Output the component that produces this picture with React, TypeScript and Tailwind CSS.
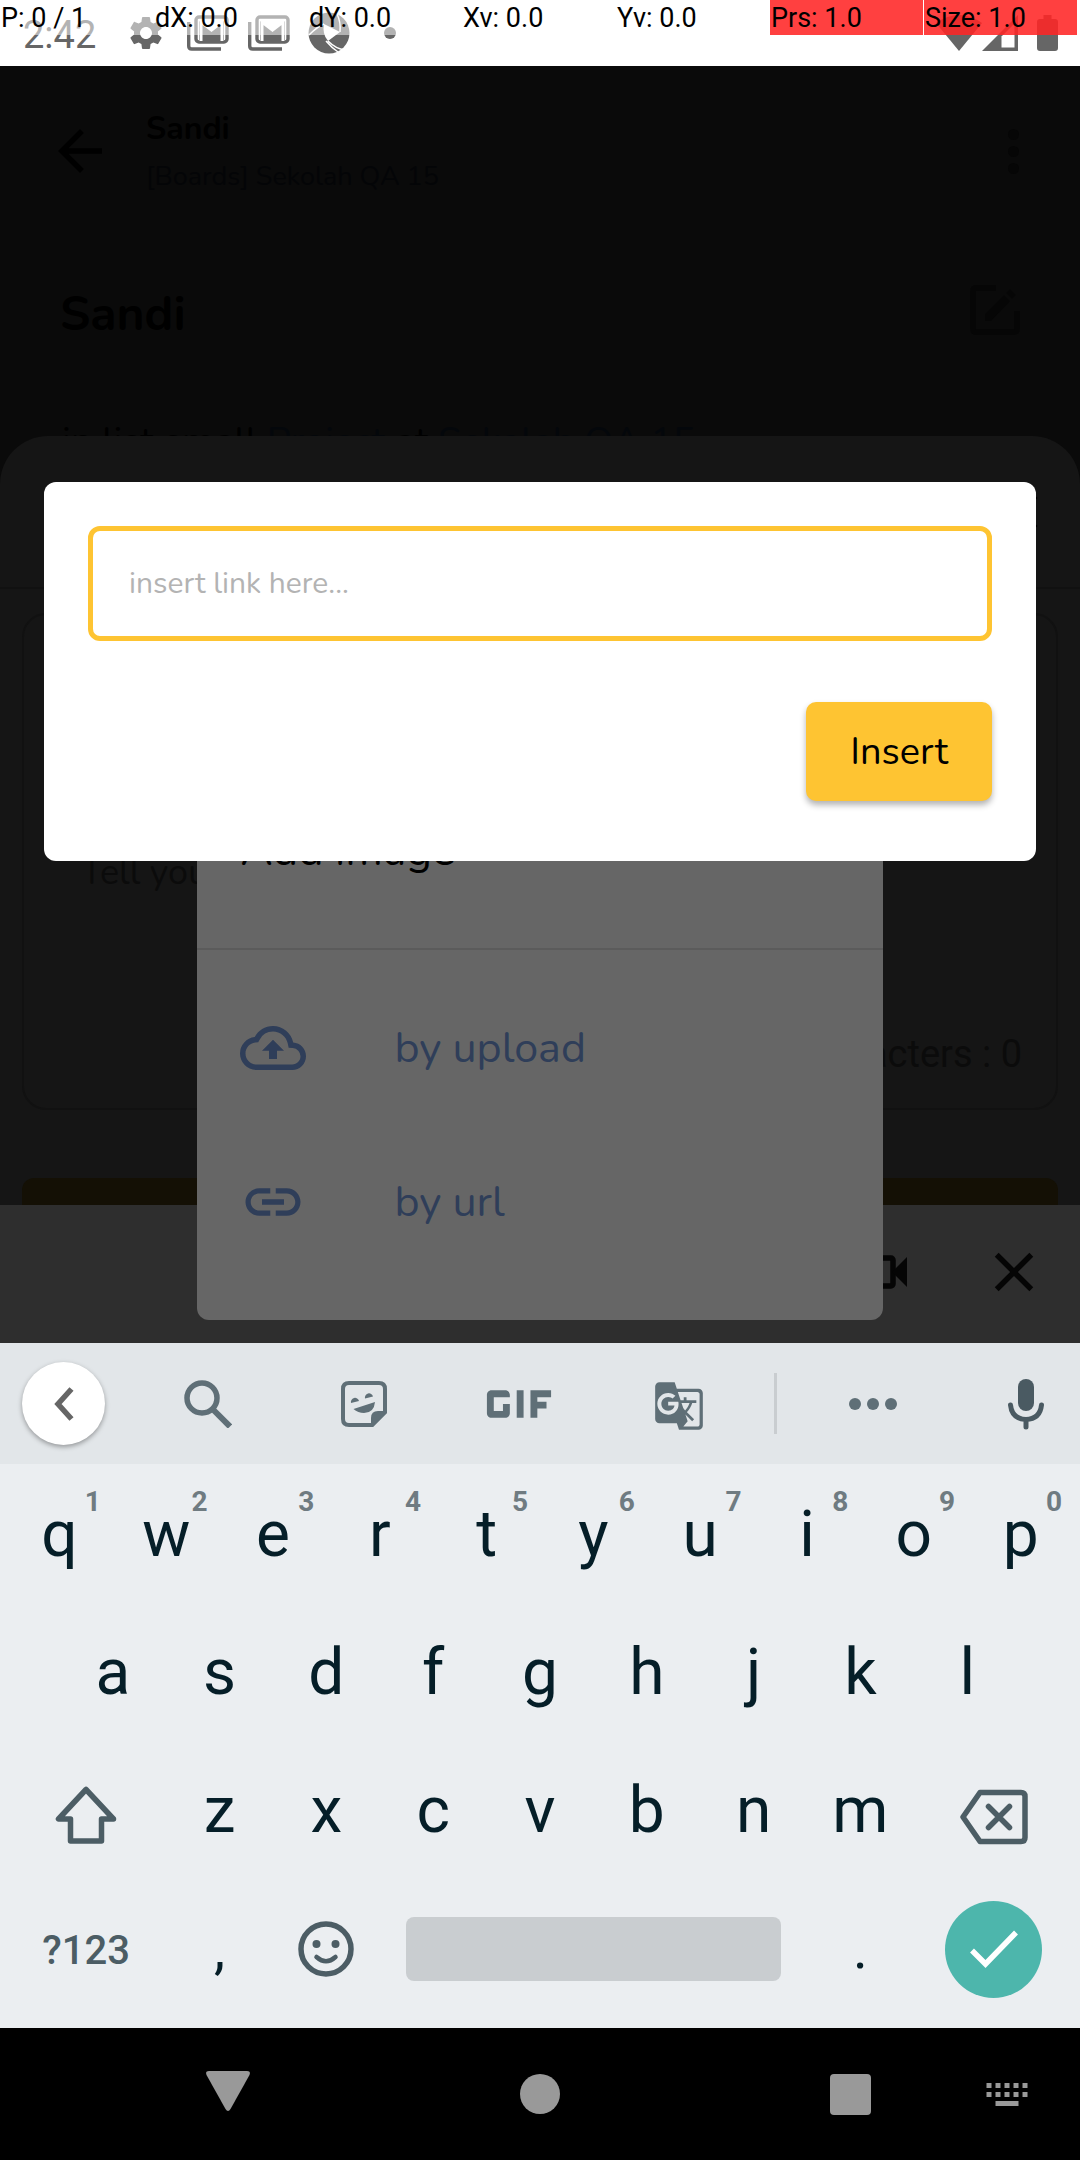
import type { ReactNode } from "react";
import {
  MdArrowBack,
  MdClose,
  MdGTranslate,
  MdGif,
  MdLink,
  MdOutlineCloudUpload,
  MdSettings,
} from "react-icons/md";

const pointerReadings = [
  { label: "P: 0 / 1", alert: false },
  { label: "dX: 0.0", alert: false },
  { label: "dY: 0.0", alert: false },
  { label: "Xv: 0.0", alert: false },
  { label: "Yv: 0.0", alert: false },
  { label: "Prs: 1.0", alert: true },
  { label: "Size: 1.0", alert: true },
];

function PointerOverlay() {
  return (
    <div className="absolute inset-x-0 top-0 grid h-[35px] grid-cols-7 gap-px bg-white/50 pr-[3px] font-['Roboto',sans-serif] text-[27px] leading-[37px] text-black">
      {pointerReadings.map((r) => (
        <span key={r.label} className={r.alert ? "h-[35px] bg-[#ff0000]/75 pl-px" : "h-[35px] pl-px"}>
          {r.label}
        </span>
      ))}
    </div>
  );
}

function MailStackIcon() {
  return (
    <svg viewBox="0 0 42 36" className="h-9 w-[42px]" fill="none" stroke="currentColor">
      <rect x="9" y="2" width="31" height="25" rx="3" strokeWidth="3.4" />
      <path d="M12 26V6l12.500 9L37 6v20z" fill="currentColor" stroke="none" />
      <path d="M14 26V7l10.500 8L35 7v19" stroke="#fff" strokeWidth="3" />
      <path d="M1.700 7v24q0 3 3 3H34" strokeWidth="3.400" />
    </svg>
  );
}

function ShutterIcon() {
  return (
    <svg viewBox="0 0 42 42" className="h-[42px] w-[42px]">
      <circle cx="21" cy="21" r="20.500" fill="currentColor" />
      <path d="M16 12l16 8-12 9q-6-7-4-17z" fill="#fff" />
      <path
        d="M16 12Q10 14 1 23M32 20Q33 10 29 2M20 29q8 8 17 9M18 29q6 7 12 11"
        stroke="#fff"
        strokeWidth="1.500"
        fill="none"
      />
    </svg>
  );
}

function StatusBar() {
  return (
    <header className="relative flex h-[66px] items-start justify-between bg-white pr-[22px] pl-[23px] text-[#666]">
      <div className="flex h-[66px] items-center">
        <span className="w-[103px] pt-1 font-['Roboto',sans-serif] text-[38px] leading-[62px]">2:42</span>
        <MdSettings className="size-10" />
        <div className="w-[21px]" />
        <MailStackIcon />
        <div className="w-[19px]" />
        <MailStackIcon />
        <div className="w-[18px]" />
        <ShutterIcon />
        <div className="ml-[34px] size-3 rounded-full bg-[#666]" />
      </div>
      <div className="flex h-[66px] items-center">
        <svg viewBox="0 0 46 36" className="h-9 w-[46px]" fill="currentColor">
          <path d="M0 8Q23-8 46 8L23 36z" />
        </svg>
        <svg viewBox="0 0 36 36" className="h-9 w-9" fill="currentColor">
          <path d="M0 36L36 0v36z" />
          <path d="M19.500 21.500L32.500 8.500v24h-13z" fill="#fff" />
        </svg>
        <svg viewBox="0 0 21 36" className="ml-[19px] h-9 w-[21px]" fill="currentColor">
          <path d="M6.500 0h8v4H18q3 0 3 3v26q0 3-3 3H3q-3 0-3-3V7q0-3 3-3h3.500z" />
        </svg>
      </div>
      <PointerOverlay />
    </header>
  );
}

function BoardPage() {
  return (
    <div className="col-start-1 row-start-1 min-w-0 bg-[#0a0a0a] text-black">
      <StatusBar />
      <div className="flex items-center pt-[39px] pr-[53px] pl-[47px]">
        <button aria-label="Back" className="w-[99px]">
          <MdArrowBack className="-mt-1 size-[66px]" />
        </button>
        <div className="flex-1">
          <h1 className="text-[32px] leading-[48px] font-bold">Sandi</h1>
          <p className="text-[27px] leading-[48px] text-[#040507]">[Boards] Sekolah QA 15</p>
        </div>
        <button aria-label="More options" className="flex w-7 flex-col items-center gap-1.5 pb-1">
          <span className="size-[11px] rounded-full bg-[#060606]" />
          <span className="size-[11px] rounded-full bg-[#060606]" />
          <span className="size-[11px] rounded-full bg-[#060606]" />
        </button>
      </div>
      <div className="flex items-center justify-between pt-[77px] pr-[60px] pl-[60px]">
        <h2 className="text-[48px] leading-[72px] font-bold">Sandi</h2>
        <button aria-label="Edit list" className="pb-2 text-[#060606]">
          <svg viewBox="0 0 50 50" className="size-[50px]" fill="none" stroke="currentColor">
            <path d="M26 3H6q-3 0-3 3v38q0 3 3 3h38q3 0 3-3V26" strokeWidth="5.500" />
            <path d="M15 36v-7L34 10l6 6-19 20z" fill="currentColor" stroke="none" />
            <path d="M36 8l4-4 6 6-4 4z" fill="currentColor" stroke="none" />
          </svg>
        </button>
      </div>
      <p className="pt-[66px] pl-[62px] text-[38px] leading-[52px]">
        in list small <span className="text-[#04070b]">Project</span> at{" "}
        <span className="text-[#04070b]">Sekolah QA 15</span>
      </p>
    </div>
  );
}

function ComposerSheet() {
  return (
    <div className="z-10 col-start-1 row-start-1 mt-[436px] flex min-w-0 flex-col overflow-hidden rounded-t-[48px] bg-[#151515]">
      <div className="flex h-[153px] items-center justify-end border-b-2 border-[#111] pr-[30px]">
        <button aria-label="Close sheet" className="text-black">
          <MdClose className="size-[60px]" />
        </button>
      </div>
      <div className="flex h-[616px] flex-col overflow-hidden px-[22px] pt-6 text-[38px] leading-[52px] text-[#0b0b0b]">
        <div className="flex h-[497px] shrink-0 flex-col justify-between rounded-3xl border-2 border-[#111] pt-[232px] pr-[34px] pb-7 pl-[57px]">
          <p className="text-[36px]">Tell your story</p>
          <p className="text-right font-['Roboto',sans-serif]">Characters : 0</p>
        </div>
        <button aria-label="Publish" className="mt-[68px] h-28 shrink-0 rounded-xl bg-[#141005]" />
      </div>
      <div className="flex h-[138px] items-center justify-end bg-[#2e2e2e] pr-[33px] pb-1 text-[#050505]">
        <button aria-label="Add video">
          <svg viewBox="0 0 52 34" className="h-[34px] w-[52px]" fill="none" stroke="currentColor">
            <rect x="3" y="3" width="35" height="28" rx="2" strokeWidth="5.500" />
            <path d="M37 17L52 2v30z" fill="currentColor" stroke="none" />
          </svg>
        </button>
        <button aria-label="Close toolbar" className="ml-[74px]">
          <MdClose className="size-[66px]" />
        </button>
      </div>
    </div>
  );
}

function AddImageDialog() {
  return (
    <section
      aria-label="Add image"
      className="z-20 col-start-1 row-start-1 mx-[18.2%] mb-[23px] min-w-0 self-end rounded-b-xl bg-[#666] pb-[41px]"
    >
      <h2 className="border-b-2 border-[#5b5b5b] px-11 pt-[60px] pb-[68px] text-[44px] leading-[58px] text-black">
        Add image
      </h2>
      <div className="pt-[21px] text-[43px] text-[#2f3e59]">
        <button className="flex h-[154px] w-full items-center pl-10">
          <span className="flex w-[158px]">
            <MdOutlineCloudUpload className="ml-[3px] size-[66px]" />
          </span>
          by upload
        </button>
        <button className="flex h-[154px] w-full items-center pl-10">
          <span className="flex w-[158px]">
            <MdLink className="ml-[3px] size-[66px]" />
          </span>
          by url
        </button>
      </div>
    </section>
  );
}

function InsertLinkDialog() {
  return (
    <form
      aria-label="Insert link"
      onSubmit={(e) => e.preventDefault()}
      className="z-30 col-start-1 row-start-1 mx-11 flex min-w-0 flex-col items-end self-center rounded-xl bg-white p-11 pb-[60px]"
    >
      <input
        type="text"
        aria-label="Link"
        placeholder="insert link here..."
        className="h-[115px] w-full rounded-xl border-[5px] border-[#fec432] px-9 text-[30px] text-black outline-none placeholder:text-[#b3b3b3]"
      />
      <button className="mt-[61px] h-[99px] rounded-[10px] bg-[#fec432] px-11 text-[38px] text-black shadow-[0_4px_6px_rgba(0,0,0,0.3)]">
        Insert
      </button>
    </form>
  );
}

function StickerIcon() {
  return (
    <svg viewBox="0 0 46 46" className="size-[46px]" fill="none" stroke="currentColor">
      <path d="M8 2h30q6 0 6 6v23L31 44H8q-6 0-6-6V8q0-6 6-6z" strokeWidth="4" />
      <path d="M30 46V37q0-7 7-7h9v2L32 46z" fill="currentColor" stroke="none" />
      <path
        d="M10 22a4 4 0 0 1 8-2zM24 17.500a4 4 0 0 1 8-2zM12.500 28L34 21q-1 11-11 11-6 0-10.500-4z"
        fill="currentColor"
        stroke="none"
      />
    </svg>
  );
}

function SuggestionStrip() {
  return (
    <div className="grid h-[121px] grid-cols-[128fr_160fr_154fr_156fr_164fr_30fr_166fr_124fr] items-center justify-items-center bg-[#e2e6e9] text-[#5f6f77]">
      <button
        aria-label="Collapse"
        className="flex size-[83px] items-center justify-center rounded-full bg-white text-[#666] shadow-[0_2px_5px_rgba(0,0,0,0.35)]"
      >
        <svg viewBox="0 0 20 34" className="h-[34px] w-5" fill="none" stroke="currentColor" strokeWidth="5.500">
          <path d="M17.500 2L4 17l13.500 15" />
        </svg>
      </button>
      <button aria-label="Search">
        <svg viewBox="0 0 48 48" className="size-12" fill="none" stroke="currentColor">
          <circle cx="18" cy="18" r="15" strokeWidth="5.500" />
          <path d="M29.500 30L46 46.500" strokeWidth="6" />
        </svg>
      </button>
      <button aria-label="Stickers">
        <StickerIcon />
      </button>
      <button aria-label="GIF">
        <MdGif className="size-[110px]" />
      </button>
      <button aria-label="Translate" className="pt-1">
        <MdGTranslate className="size-[52px]" />
      </button>
      <div className="h-[61px] w-[3px] bg-[#c9cdd0]" />
      <button aria-label="More" className="flex gap-1.5">
        <span className="size-3 rounded-full bg-[#5f6f77]" />
        <span className="size-3 rounded-full bg-[#5f6f77]" />
        <span className="size-3 rounded-full bg-[#5f6f77]" />
      </button>
      <button aria-label="Voice input" className="justify-self-end pr-9 text-[#4a5a62]">
        <svg viewBox="0 0 36 52" className="h-[52px] w-9" fill="none" stroke="currentColor">
          <rect x="10" y="1" width="16" height="32" rx="8" fill="currentColor" stroke="none" />
          <path d="M2.500 27Q4 41 18 41.500 32 41 33.500 27M18 42v7" strokeWidth="5" strokeLinecap="round" />
        </svg>
      </button>
    </div>
  );
}

function Key({ label, hint }: { label: string; hint?: string }) {
  return (
    <button className="relative col-span-2 flex h-full items-center justify-center text-[64px] leading-none text-[#051e28]">
      {label}
      {hint && (
        <span className="absolute top-5 right-3 text-[28px] leading-8 font-bold text-[#6f7b81]">{hint}</span>
      )}
    </button>
  );
}

function KeyRow({ children }: { children: ReactNode }) {
  return (
    <div className="grid h-[138px] grid-cols-[repeat(20,minmax(0,1fr))] items-center justify-items-stretch px-1.5">
      {children}
    </div>
  );
}

function Keyboard() {
  return (
    <section aria-label="Keyboard" className="bg-[#ebeef1] font-['Roboto',sans-serif] text-[#4c5d65]">
      <SuggestionStrip />
      <div className="pt-0.5 pb-2.5">
        <KeyRow>
          {"qwertyuiop".split("").map((k, i) => (
            <Key key={k} label={k} hint={String((i + 1) % 10)} />
          ))}
        </KeyRow>
        <KeyRow>
          <span />
          {"asdfghjkl".split("").map((k) => (
            <Key key={k} label={k} />
          ))}
        </KeyRow>
        <KeyRow>
          <button aria-label="Shift" className="col-span-3 flex justify-center pt-2">
            <svg
              viewBox="0 0 62 60"
              className="h-[60px] w-[62px]"
              fill="none"
              stroke="currentColor"
              strokeWidth="5.500"
              strokeLinejoin="round"
            >
              <path d="M31 4.500L3.500 34H15.500v22h31V34H58.500z" />
            </svg>
          </button>
          {"zxcvbnm".split("").map((k) => (
            <Key key={k} label={k} />
          ))}
          <button aria-label="Backspace" className="col-span-3 flex justify-center pt-3">
            <svg
              viewBox="0 0 70 56"
              className="h-14 w-[70px]"
              fill="none"
              stroke="currentColor"
              strokeWidth="5.500"
              strokeLinejoin="round"
            >
              <path d="M21 3.500H62q4 0 4 4v41q0 4-4 4H21L4 28z" />
              <path d="M29.500 17.500l21 21M50.500 17.500l-21 21" strokeLinecap="round" />
            </svg>
          </button>
        </KeyRow>
        <KeyRow>
          <button className="col-span-3 pt-1 text-[40px] font-medium">?123</button>
          <button className="col-span-2 text-[56px] text-[#051e28]">,</button>
          <button aria-label="Emoji" className="col-span-2 flex justify-center">
            <svg viewBox="0 0 56 56" className="size-14" fill="none" stroke="currentColor">
              <circle cx="28" cy="28" r="25" strokeWidth="5.500" />
              <circle cx="18.500" cy="23" r="4" fill="currentColor" stroke="none" />
              <circle cx="37.500" cy="23" r="4" fill="currentColor" stroke="none" />
              <path d="M18.500 36q9.500 8.500 19 0" strokeWidth="4.500" strokeLinecap="round" />
            </svg>
          </button>
          <div className="col-span-8 px-[26px]">
            <button aria-label="Space" className="block h-16 w-full rounded-lg bg-[#c9cdd0]" />
          </div>
          <button className="col-span-2 text-[56px] text-[#051e28]">.</button>
          <div className="col-span-3 flex justify-center">
            <button
              aria-label="Done"
              className="flex size-[97px] items-center justify-center rounded-full bg-[#4db6ac]"
            >
              <svg viewBox="0 0 48 38" className="h-[38px] w-12" fill="none" stroke="#fff" strokeWidth="5.500">
                <path d="M2 20.500l13.500 13.500L46 2.500" />
              </svg>
            </button>
          </div>
        </KeyRow>
      </div>
    </section>
  );
}

function NavigationBar() {
  return (
    <nav
      aria-label="System"
      className="grid h-[132px] grid-cols-[72fr_312fr_312fr_36fr_237fr_75fr_36fr] items-center justify-items-center bg-black text-[#999]"
    >
      <button aria-label="Hide keyboard" className="col-start-2 pb-1.5">
        <svg viewBox="0 0 44 40" className="h-10 w-11" fill="currentColor">
          <path d="M3 0H41q4 0 2.500 4L24.500 38q-2.500 4-5 0L.500 4Q-1 0 3 0z" />
        </svg>
      </button>
      <button aria-label="Home" className="col-start-3 size-10 rounded-full bg-[#999]" />
      <button aria-label="Recent apps" className="col-start-5 size-[41px] rounded-[4px] bg-[#999]" />
      <button aria-label="Switch keyboard" className="col-start-6">
        <svg viewBox="0 0 42 23" className="h-[23px] w-[42px]" fill="currentColor">
          {[0, 9, 18, 27, 36].map((x) => (
            <path key={x} d={`M${x + 0.5} 0h5v5h-5zM${x + 0.5} 9h5v5h-5z`} />
          ))}
          <path d="M9.500 18h23v5h-23z" />
        </svg>
      </button>
    </nav>
  );
}

export default function App() {
  return (
    <div className="flex min-h-screen flex-col bg-black font-['Nunito','Lato',sans-serif]">
      <main className="grid flex-1 grid-cols-1">
        <BoardPage />
        <ComposerSheet />
        <AddImageDialog />
        <InsertLinkDialog />
      </main>
      <Keyboard />
      <NavigationBar />
    </div>
  );
}
